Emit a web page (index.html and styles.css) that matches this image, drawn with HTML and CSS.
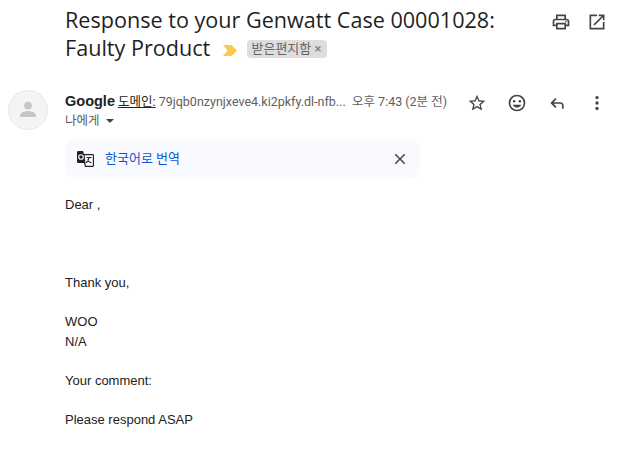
FILE: index.html
```html
<!DOCTYPE html>
<html lang="ko">
<head>
    <meta charset="UTF-8">
    <title>Response to your Genwatt Case</title>
    <link rel="stylesheet" href="styles.css">
</head>
<body>

<div class="mail">
    <!-- subject -->
    <div class="subject-row">
        <h2 class="subject">Response to your Genwatt Case 00001028:<br>Faulty Product
            <svg class="marker" width="15" height="11" viewBox="0 0 15 11"><path d="M0 0h8.500L14 5.500 8.500 11H0l4.500-5.500z" fill="#f7cb4d"/></svg>
            <span class="label">받은편지함 <span class="label-x">×</span></span>
        </h2>
        <div class="subject-icons">
            <svg width="20" height="20" viewBox="0 0 24 24"><path fill="#444" d="M19 8h-1V3H6v5H5c-1.660 0-3 1.340-3 3v6h4v4h12v-4h4v-6c0-1.660-1.340-3-3-3zM8 5h8v3H8V5zm8 14H8v-4h8v4zm2-4v-2H6v2H4v-4c0-.55.45-1 1-1h14c.55 0 1 .45 1 1v4h-2z"/><circle cx="18" cy="11.500" r="1" fill="#444"/></svg>
            <svg width="20" height="20" viewBox="0 0 24 24"><path fill="#444" d="M19 19H5V5h7V3H3v18h18v-9h-2v7zM14 3v2h3.590l-9.830 9.830 1.410 1.410L19 6.410V10h2V3h-7z"/></svg>
        </div>
    </div>

    <!-- sender -->
    <div class="sender-row">
        <div class="avatar">
            <svg width="24" height="24" viewBox="0 0 24 24"><circle cx="12" cy="7.600" r="3.900" fill="#c4c6c9"/><path fill="#c4c6c9" d="M4 19v-1.600c0-2.900 5.300-4.400 8-4.400s8 1.500 8 4.400V19z"/></svg>
        </div>
        <div class="sender-info">
            <div class="sender-line">
                <b class="sender-name">Google</b>
                <span class="sender-domain">도메인:</span>
                <span class="sender-addr">79jqb0nzynjxeve4.ki2pkfy.dl-nfb...</span>
            </div>
            <div class="to-line">나에게 <span class="caret"></span></div>
        </div>
        <div class="sender-time">오후 7:43 (2분 전)</div>
        <div class="sender-icons">
            <svg width="20" height="20" viewBox="0 0 24 24"><path fill="#444" d="M22 9.240l-7.190-.62L12 2 9.190 8.630 2 9.240l5.460 4.730L5.820 21 12 17.270 18.180 21l-1.630-7.030L22 9.240zM12 15.400l-3.760 2.270 1-4.280-3.320-2.880 4.380-.38L12 6.100l1.710 4.040 4.380.38-3.320 2.880 1 4.280L12 15.400z"/></svg>
            <svg width="20" height="20" viewBox="0 0 24 24"><path fill="#444" d="M12 2a10 10 0 1 0 0 20 10 10 0 0 0 0-20zm0 18a8 8 0 1 1 0-16 8 8 0 0 1 0 16z"/><circle cx="8.600" cy="9.800" r="1.500" fill="#444"/><circle cx="15.400" cy="9.800" r="1.500" fill="#444"/><path fill="#444" d="M12 17.500c2.330 0 4.310-1.460 5.110-3.500H6.890c.8 2.040 2.780 3.500 5.110 3.500z"/></svg>
            <svg width="20" height="20" viewBox="0 0 24 24"><path fill="#444" d="M20 19v-4c0-2.200-1.800-4-4-4H7.830l3.580-3.590L10 6l-6 6 6 6 1.410-1.410L7.830 13H16c1.100 0 2 .9 2 2v4h2z"/></svg>
            <svg width="20" height="20" viewBox="0 0 24 24"><circle cx="12" cy="5.500" r="2" fill="#444"/><circle cx="12" cy="12" r="2" fill="#444"/><circle cx="12" cy="18.500" r="2" fill="#444"/></svg>
        </div>
    </div>

    <!-- translate bar -->
    <div class="translate-bar">
        <svg class="translate-icon" width="18" height="16" viewBox="0 0 18 16">
            <path fill="#202124" d="M1 1.500C1 .7 1.600 0 2.400 0H7l1 3h8.500c.8 0 1.500.7 1.500 1.500V14.500c0 .8-.7 1.500-1.500 1.500H9l-1-4H2.400C1.600 12 1 11.300 1 10.500z"/>
            <path fill="#fff" d="M8.600 4.200H16.800V14.800H9.800z"/>
            <circle cx="5" cy="6" r="2.300" fill="none" stroke="#fff" stroke-width="1.100"/>
            <path stroke="#202124" stroke-width="1.200" fill="none" d="M10.500 6.500h5M13 6.500c-.3 2.500-1.500 4.300-2.800 5.300M11.500 8.500c.8 1.500 2 2.700 3.800 3.500"/>
        </svg>
        <span class="translate-link">한국어로 번역</span>
        <svg class="translate-close" width="18" height="18" viewBox="0 0 24 24"><path fill="#444" d="M19 6.410L17.590 5 12 10.590 6.410 5 5 6.410 10.590 12 5 17.590 6.410 19 12 13.410 17.590 19 19 17.590 13.410 12z"/></svg>
    </div>

    <!-- body -->
    <div class="mail-body">
        <p class="gap-big">Dear ,</p>
        <p class="gap-small">Thank you,</p>
        <p>WOO</p>
        <p class="gap-small">N/A</p>
        <p class="gap-small">Your comment:</p>
        <p>Please respond ASAP</p>
    </div>
</div>

</body>
</html>
```

FILE: styles.css
```css
body {
    margin: 0;
    background-color: #fff;
    font-family: Roboto, "Noto Sans CJK KR", sans-serif;
    color: #222;
}
.mail {
    padding: 6px 16px 0 8px;
}
.subject-row {
    display: flex;
    justify-content: space-between;
    padding-left: 57px;
}
.subject {
    margin: 0;
    font-family: "Open Sans", "Noto Sans CJK KR", sans-serif;
    font-size: 21.6px;
    line-height: 28px;
    font-weight: 400;
    color: #1f1f1f;
}
.marker {
    margin: 0 4px 0 7px;
}
.label {
    display: inline-block;
    vertical-align: 3px;
    background-color: #ddd;
    border-radius: 4px;
    padding: 0 6px 0 4px;
    font-family: Roboto, "Noto Sans CJK KR", sans-serif;
    font-size: 13px;
    line-height: 18px;
    color: #666;
}
.label-x {
    color: #777;
}
.subject-icons {
    display: flex;
    gap: 16px;
    padding: 6px 9px 0 0;
}
.sender-row {
    display: flex;
    margin-top: 28px;
    height: 48px;
}
.avatar {
    width: 40px;
    height: 40px;
    box-sizing: border-box;
    border: 1px solid #e8e8e8;
    border-radius: 50%;
    background-color: #f4f4f4;
    display: flex;
    align-items: center;
    justify-content: center;
    margin-right: 17px;
}
.sender-info {
    width: 287px;
    font-size: 12.5px;
    line-height: 19px;
    padding-top: 2px;
    white-space: nowrap;
}
.sender-name {
    font-family: "Liberation Sans", Arial, sans-serif;
    font-size: 14.500px;
    color: #222;
}
.sender-domain {
    color: #222;
    text-decoration: underline;
}
.sender-addr {
    color: #5e5e5e;
}
.to-line {
    color: #5e5e5e;
}
.caret {
    display: inline-block;
    border: 4px solid transparent;
    border-top: 4px solid #444;
    border-bottom: 0;
    margin-left: 3px;
    vertical-align: 2px;
}
.sender-time {
    font-size: 12.5px;
    line-height: 19px;
    padding-top: 2px;
    color: #5e5e5e;
    white-space: nowrap;
}
.sender-icons {
    display: flex;
    gap: 20px;
    margin-left: 20px;
    padding-top: 3px;
    height: 20px;
}
.translate-bar {
    display: flex;
    align-items: center;
    width: 355px;
    height: 40px;
    box-sizing: border-box;
    margin: 1px 0 0 57px;
    padding: 0 11px;
    background-color: #f8faff;
    border-radius: 10px;
}
.translate-icon {
    margin-right: 11px;
}
.translate-link {
    flex: 1;
    font-size: 13px;
    line-height: 18px;
    color: #0b57d0;
}
.mail-body {
    margin: 16px 0 0 57px;
    font-family: "Liberation Sans", Arial, sans-serif;
    font-size: 13px;
    line-height: 20px;
    color: #222;
}
.mail-body p {
    margin: 0;
}
.mail-body .gap-big {
    margin-bottom: 58px;
}
.mail-body .gap-small {
    margin-bottom: 19px;
}
```
